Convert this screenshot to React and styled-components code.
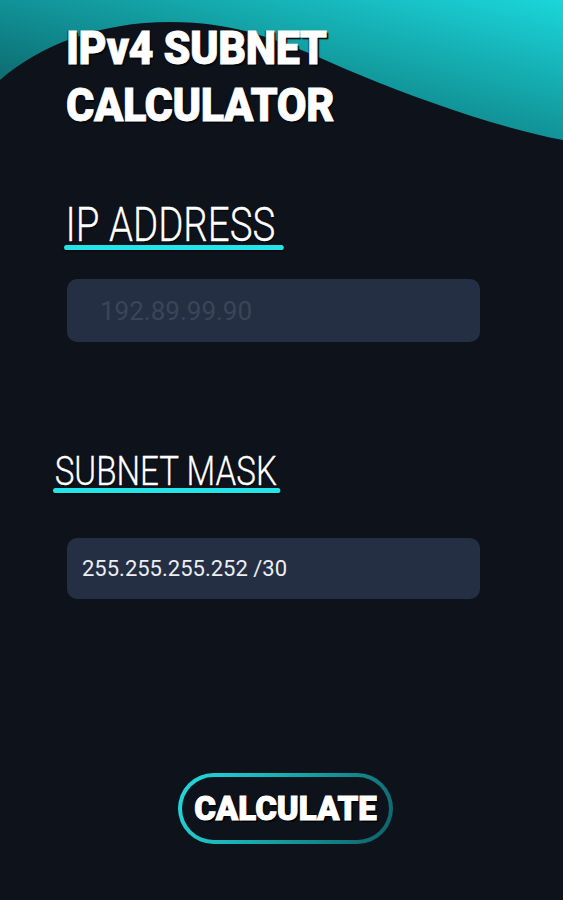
import React from "react";
import styled, { createGlobalStyle } from "styled-components";

const GlobalStyle = createGlobalStyle`
    * { box-sizing: border-box; }
    body {
        margin: 0;
        background: #0e121b;
        font-family: Roboto, "Liberation Sans", sans-serif;
    }
`;

export default function App() {
    return (
        <Page>
            <GlobalStyle />
            <Header>
                <Wave viewBox="0 0 563 150" preserveAspectRatio="none">
                    <defs>
                        <linearGradient id="waveGrad" x1="0" y1="1" x2="1" y2="0">
                            <stop offset="0" stopColor="#0a4f55" />
                            <stop offset="0.55" stopColor="#12999d" />
                            <stop offset="1" stopColor="#1bd6da" />
                        </linearGradient>
                    </defs>
                    <path
                        d="M0 0 H563 V140 C500 128, 420 100, 360 75 C300 50, 250 22, 170 22 C100 22, 40 45, 0 80 Z"
                        fill="url(#waveGrad)"
                    />
                </Wave>
                <Title>IPv4 SUBNET<br />CALCULATOR</Title>
            </Header>

            <Field $top={50} $left={64}>
                <Label $size={49} $scale={0.785}>
                    <span>IP ADDRESS</span>
                    <Underline $extra={11} />
                </Label>
            </Field>
            <InputBox $gap={29} $height={63} $pad={33} $size={26} placeholder="192.89.99.90" />

            <Field $top={110} $left={53}>
                <Label $size={40} $scale={0.83}>
                    <span>SUBNET MASK</span>
                    <Underline $extra={4} />
                </Label>
            </Field>
            <InputBox $gap={45} $height={61} $pad={15} $size={22} value="255.255.255.252 /30" readOnly />

            <ButtonRow>
                <CalcButton>CALCULATE</CalcButton>
            </ButtonRow>
        </Page>
    );
}

const Page = styled.div`
    width: 563px;
    min-height: 900px;
    background: #0e121b;
    display: flex;
    flex-direction: column;
    overflow: hidden;
`;

const Header = styled.header`
    position: relative;
    height: 150px;
    padding: 19px 0 0 66px;
`;

const Wave = styled.svg`
    position: absolute;
    top: 0;
    left: 0;
    width: 563px;
    height: 150px;
`;

const Title = styled.h1`
    position: relative;
    display: inline-block;
    margin: 0;
    transform: scaleX(0.92);
    transform-origin: left center;
    font-family: Roboto, "Liberation Sans", sans-serif;
    font-weight: 900;
    font-size: 47px;
    line-height: 57px;
    letter-spacing: -0.5px;
    color: #ffffff;
    -webkit-text-stroke: 0.8px #ffffff;
    text-shadow: 2px 2px 1px #05070b, 1px 1px 0 #05070b, -1px 0 1px #05070b;
`;

const Field = styled.div`
    margin-top: ${p => p.$top}px;
    padding-left: ${p => p.$left}px;
`;

const Label = styled.h2`
    display: inline-flex;
    flex-direction: column;
    margin: 0;
    transform: scaleX(${p => p.$scale});
    transform-origin: left center;
    font-family: Roboto, "Liberation Sans", sans-serif;
    font-weight: 300;
    font-size: ${p => p.$size}px;
    line-height: 1;
    color: #ffffff;
    -webkit-text-stroke: 0.3px #ffffff;
    text-shadow: 1px 1px 1px #000;

    span {
        padding-left: 2px;
    }
`;

const Underline = styled.div`
    height: 5px;
    margin-top: -4px;
    margin-right: -${p => p.$extra}px;
    border-radius: 3px;
    background: #22e4e9;
    box-shadow: 0 1px 2px #000;
`;

const InputBox = styled.input`
    display: block;
    width: 413px;
    height: ${p => p.$height}px;
    margin: ${p => p.$gap}px 0 0 67px;
    padding: 0 0 0 ${p => p.$pad}px;
    border: none;
    border-radius: 10px;
    outline: none;
    background: #252f43;
    font-family: Roboto, "Liberation Sans", sans-serif;
    font-size: ${p => p.$size}px;
    color: #eceef3;

    &::placeholder {
        color: #3b4559;
    }
`;

const ButtonRow = styled.div`
    display: flex;
    justify-content: center;
    padding-left: 8px;
    margin-top: 174px;
`;

const CalcButton = styled.button`
    width: 215px;
    height: 71px;
    padding: 0;
    border: 4px solid transparent;
    border-radius: 36px;
    background:
        linear-gradient(#0e121b, #0e121b) padding-box,
        linear-gradient(120deg, #25dcdd 0%, #17a9ad 45%, #0e5f66 100%) border-box;
    font-family: Roboto, "Liberation Sans", sans-serif;
    font-weight: 900;
    font-size: 33px;
    letter-spacing: 0;
    color: #ffffff;
    -webkit-text-stroke: 1px #ffffff;
    text-shadow: 2px 2px 1px #000, -1px -1px 0 #000;
    cursor: pointer;
`;
